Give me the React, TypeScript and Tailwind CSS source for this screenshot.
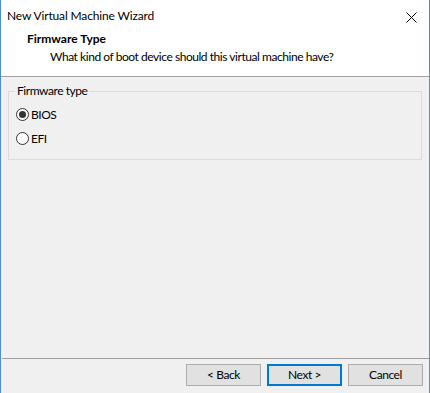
import React from "react";

function Radio({ label, checked }: { label: string; checked?: boolean }) {
  return (
    <div className="flex items-center h-[13px]">
      <span className="w-[13px] h-[13px] rounded-full border border-[#333333] bg-white flex items-center justify-center">
        {checked && <span className="w-[7px] h-[7px] rounded-full bg-[#333333]" />}
      </span>
      <span className="ml-[2px] leading-none">{label}</span>
    </div>
  );
}

function WinButton({ label, primary }: { label: string; primary?: boolean }) {
  return (
    <button
      className={
        primary
          ? "w-[75px] h-[22px] bg-[#e1e1e1] border-2 border-[#0078d7] text-[12px] leading-none text-black"
          : "w-[75px] h-[22px] bg-[#e1e1e1] border border-[#adadad] text-[12px] leading-none text-black"
      }
    >
      {label}
    </button>
  );
}

export default function App() {
  return (
    <div
      className="w-[430px] h-[393px] bg-[#f0f0f0] border-l border-r border-[#4c8fd8] flex flex-col text-[12px] text-black overflow-hidden tracking-[-0.45px]"
      style={{ fontFamily: 'Lato, "Noto Sans", sans-serif' }}
    >
      <div className="bg-white h-[76px] flex flex-col">
        <div className="h-[22px] flex items-end justify-between pl-[6px] pr-[12px]">
          <span className="leading-none tracking-[-0.15px]">New Virtual Machine Wizard</span>
          <svg width="11" height="11" viewBox="0 0 11 11" className="mb-[-1px]">
            <path d="M0.5 0.5 L10.5 10.5 M10.5 0.5 L0.5 10.5" stroke="#000" strokeWidth="1" />
          </svg>
        </div>
        <div className="pl-[26px] pt-[11px] font-bold leading-none tracking-normal">Firmware Type</div>
        <div className="pl-[49px] pt-[6px] leading-none">What kind of boot device should this virtual machine have?</div>
      </div>
      <div className="h-px bg-[#a0a0a0]" />
      <div className="px-[7px] pt-[14px]">
        <div className="relative border border-[#dcdcdc] h-[69px] pt-[16px] pl-[7px] flex flex-col gap-[11px]">
          <span className="absolute -top-[8px] left-[6px] px-[2px] bg-[#f0f0f0] leading-[14px]">Firmware type</span>
          <Radio label="BIOS" checked />
          <Radio label="EFI" />
        </div>
      </div>
      <div className="flex-1" />
      <div className="h-px bg-[#a0a0a0] ml-px" />
      <div className="h-[34px] flex items-start justify-end gap-[6px] pt-[5px] pr-[6px]">
        <WinButton label="< Back" />
        <WinButton label="Next >" primary />
        <WinButton label="Cancel" />
      </div>
    </div>
  );
}
